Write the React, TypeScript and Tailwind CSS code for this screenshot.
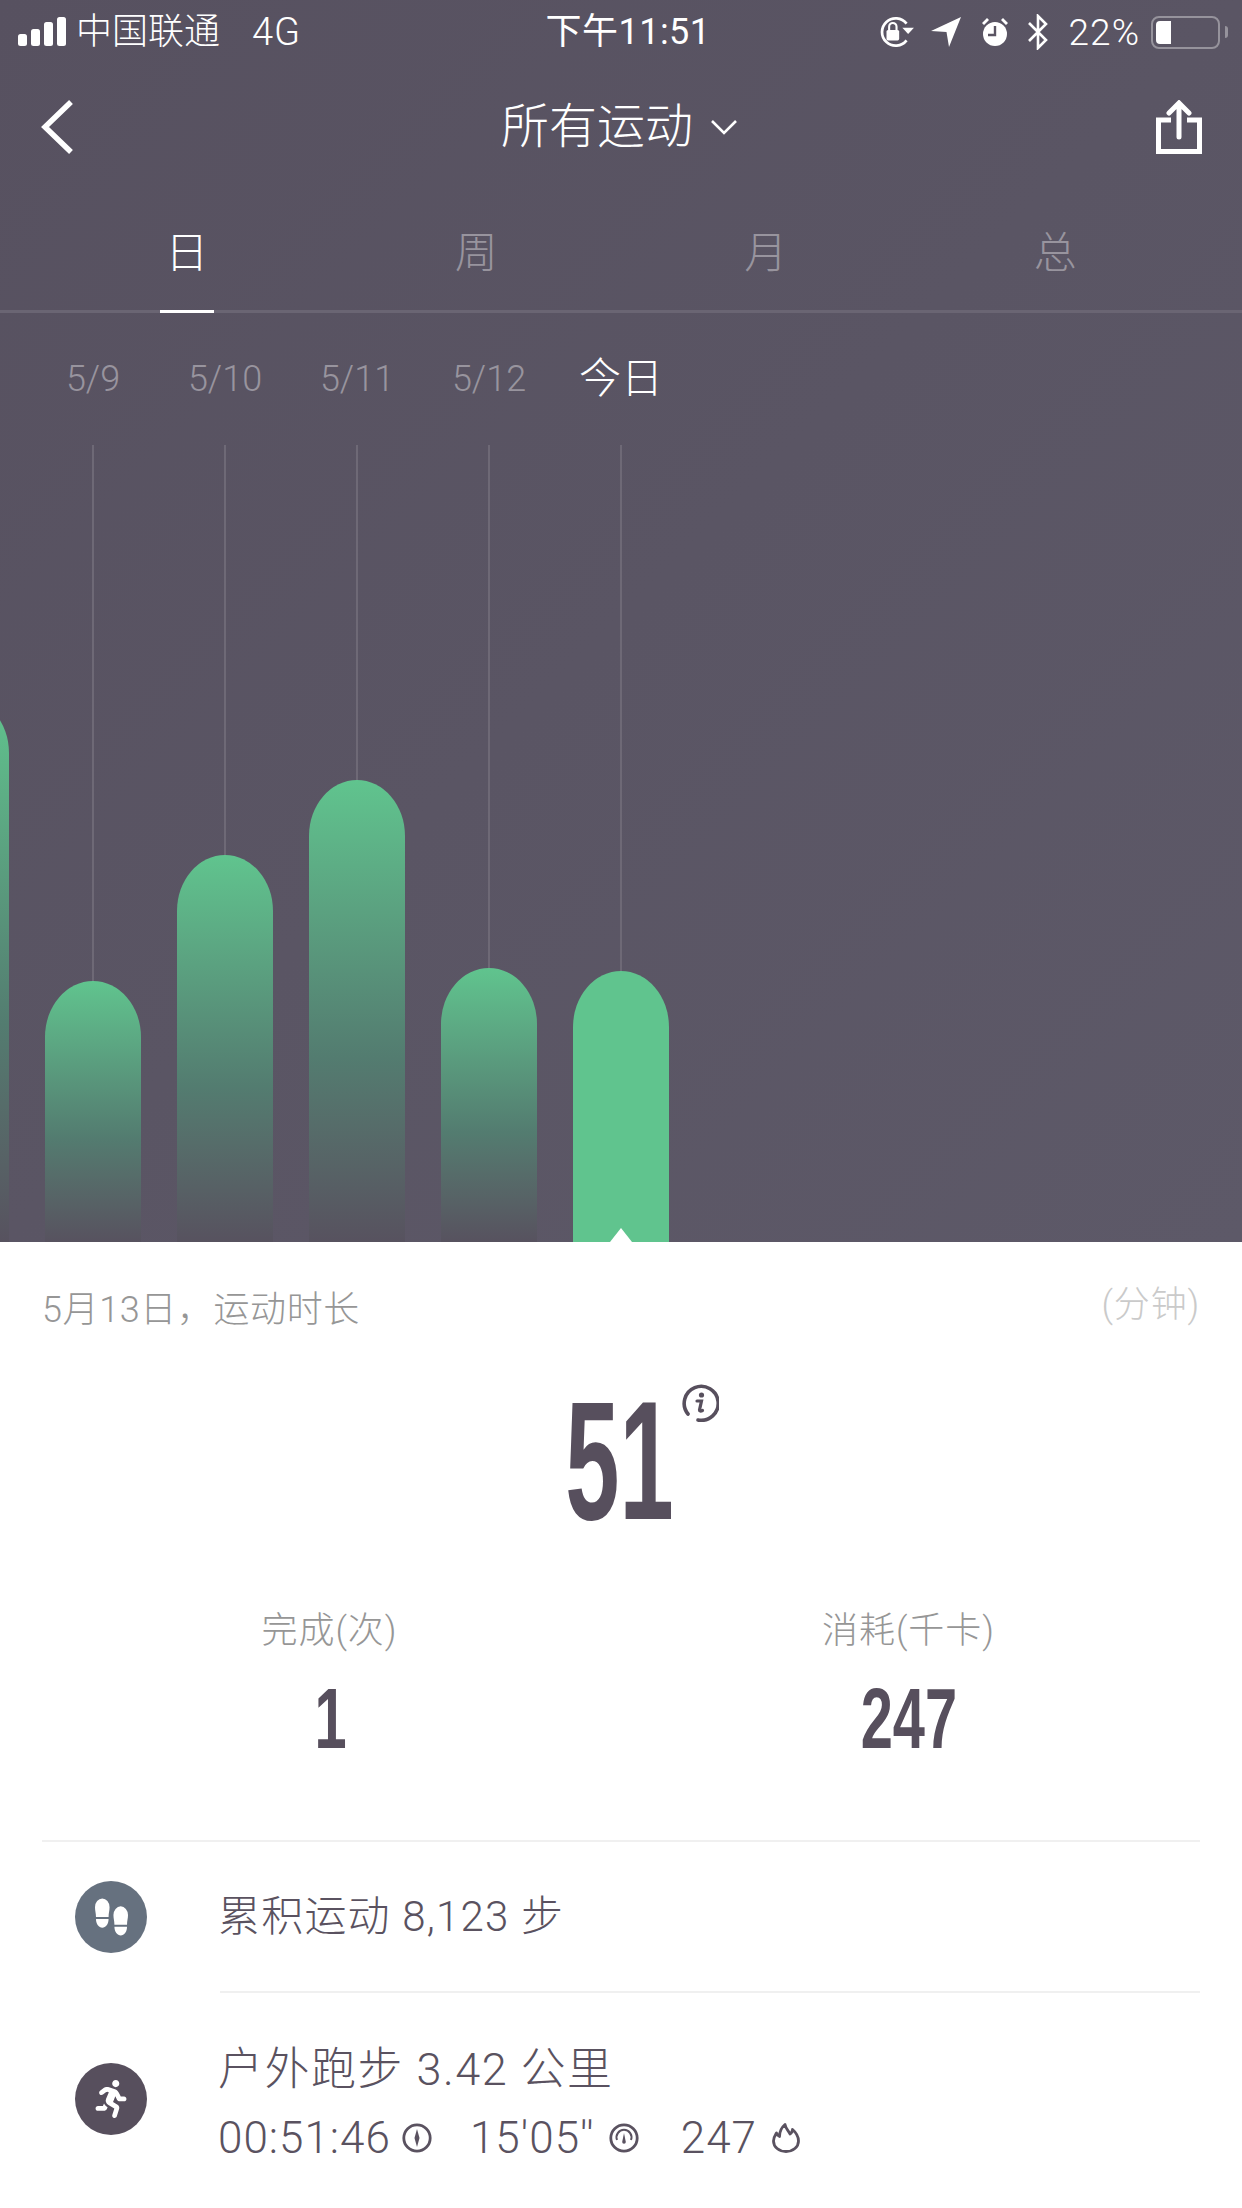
import React from 'react';
import { FaRunning } from 'react-icons/fa';

const days = [
  { label: '', height: 545 },
  { label: '5/9', height: 261 },
  { label: '5/10', height: 387 },
  { label: '5/11', height: 462 },
  { label: '5/12', height: 274 },
  { label: '今日', height: 271, active: true },
];

function StatusBar() {
  return (
    <div className="flex items-center h-[64px] pl-[18px] pr-[14px] text-white text-[36px] leading-none">
      <div className="flex-1 flex items-center">
        <svg width="48" height="30" viewBox="0 0 48 30" fill="white">
          <rect x="0" y="17" width="9" height="12" rx="2.5" />
          <rect x="13" y="12" width="9" height="17" rx="2.5" />
          <rect x="26" y="5" width="9" height="24" rx="2.5" />
          <rect x="39" y="0" width="9" height="29" rx="2.5" />
        </svg>
        <span className="ml-[10px]">中国联通</span>
        <span className="ml-[32px] text-[38px] tracking-[1px]">4G</span>
      </div>
      <div className="ml-[10px] font-normal text-[36px] tracking-[0.5px]">下午11:51</div>
      <div className="flex-1 flex items-center justify-end">
        <svg width="38" height="32" viewBox="0 0 36 30" fill="none" className="mr-[16px]">
          <path d="M28 7A13 13 0 1 0 28 23" stroke="white" strokeWidth="2.6" />
          <path d="M24 11h11l-5.5 6z" fill="white" />
          <rect x="9" y="13" width="12" height="10" rx="1.5" fill="white" />
          <path d="M11.5 13v-3a3.5 3.5 0 0 1 7 0v3" stroke="white" strokeWidth="2" />
        </svg>
        <svg width="30" height="30" viewBox="0 0 30 30" fill="white" className="mr-[20px]">
          <path d="M30 0 18 30 15.500 15 0 14z" />
        </svg>
        <svg width="28" height="30" viewBox="0 0 28 30" className="mr-[19px]">
          <path d="M1 6 6 1l2 2-5 5zM27 6l-5-5-2 2 5 5z" fill="white" />
          <circle cx="14" cy="17" r="12" fill="white" />
          <path d="M14 9v9H7" stroke="#5a5462" strokeWidth="2.4" fill="none" />
        </svg>
        <svg width="20" height="36" viewBox="0 0 20 36" fill="none" className="mr-[21px]">
          <path d="M1 9 18 26 10 34V2l8 8L1 27" stroke="white" strokeWidth="2.6" />
        </svg>
        <span className="text-[37px] tracking-[1px] mr-[11px]">22%</span>
        <div className="w-[69px] h-[33px] rounded-[8px] border-[2.5px] border-[#96939c] p-[3px] flex">
          <div className="w-[15px] bg-white rounded-l-[4px]" />
        </div>
        <div className="w-[3px] h-[12px] bg-[#96939c] ml-[5px] rounded-r-full" />
      </div>
    </div>
  );
}

function NavBar() {
  return (
    <div className="relative flex items-center justify-between h-[127px] pl-[40px] pr-[40px]">
      <svg width="34" height="56" viewBox="0 0 34 56" fill="none" className="mt-[-2px]">
        <path d="M31 3 5 28l26 25" stroke="white" strokeWidth="5.500" />
      </svg>
      <div className="absolute left-[501px] top-[32px] flex items-center text-white text-[48px] leading-[62px]">
        所有运动
        <svg width="28" height="16" viewBox="0 0 28 16" fill="none" className="ml-[17px]">
          <path d="M2 2l12 12L26 2" stroke="white" strokeWidth="2.600" />
        </svg>
      </div>
      <svg width="46" height="54" viewBox="0 0 46 54" fill="none" className="mt-[-2px]">
        <path d="M15 20H2.500v31.500h41V20H31" stroke="white" strokeWidth="5" />
        <path d="M23 37V4M13 13 23 3l10 10" stroke="white" strokeWidth="5" strokeLinecap="round" />
      </svg>
    </div>
  );
}

function Tabs() {
  const tabs = ['日', '周', '月', '总'];
  return (
    <div className="grid grid-cols-4 px-[42px] h-[122px] border-b-[3px] border-[#6a6573] text-[43px]">
      {tabs.map((tab, i) => (
        <div key={tab} className="relative flex justify-center pt-[37px] leading-[50px]">
          <span className={i === 0 ? 'text-white' : 'text-[#98949e]'}>{tab}</span>
          {i === 0 && <div className="absolute bottom-[-3px] w-[54px] h-[3px] bg-white" />}
        </div>
      ))}
    </div>
  );
}

function Chart() {
  return (
    <div className="flex flex-1 ml-[-105px] min-h-0">
      {days.map((day) => (
        <div key={day.height} className="w-[132px] shrink-0 flex flex-col items-center">
          <div
            className={
              day.active
                ? 'h-[132px] pt-[41px] leading-[50px] text-[42px] text-white'
                : 'h-[132px] pt-[42px] leading-[48px] text-[36px] text-[#98949e]'
            }
          >
            {day.label}
          </div>
          {day.label ? <div className="flex-1 w-[2px] bg-[#6e6976]" /> : <div className="flex-1" />}
          <div
            className={
              day.active
                ? 'relative w-[96px] rounded-t-[48px_56px] bg-[#60c48e] flex justify-center'
                : 'w-[96px] rounded-t-[48px_56px] bg-gradient-to-b from-[#60c48e] via-[#537c70] via-60% to-[#57525f]'
            }
            style={{ height: day.height }}
          >
            {day.active && (
              <svg width="22" height="14" viewBox="0 0 22 14" className="absolute bottom-0" fill="white">
                <path d="M11 0 22 14H0z" />
              </svg>
            )}
          </div>
        </div>
      ))}
    </div>
  );
}

function InfoIcon() {
  return (
    <svg width="38" height="38" viewBox="0 0 38 38" fill="none">
      <path d="M7 30A17 17 0 1 1 17 36" stroke="#574f5d" strokeWidth="3.600" strokeLinecap="round" />
      <circle cx="20.500" cy="11" r="2.600" fill="#574f5d" />
      <path d="M16 17h4.500l-2 9c0 1 1 1.500 3 .5" stroke="#574f5d" strokeWidth="3.200" strokeLinecap="round" />
    </svg>
  );
}

function Footprints() {
  return (
    <svg width="33" height="38" viewBox="0 0 34 38" fill="white">
      <path d="M0 9a7.500 9 0 0 1 15 0c0 4-1 6-1 10H1C1 15 0 13 0 9z" />
      <path d="M1 21h13c0 5-3 9-6.500 9S1 26 1 21z" />
      <path d="M19 17a7.500 9 0 0 1 15 0c0 4-1 6-1 10H20c0-4-1-6-1-10z" />
      <path d="M20 29h13c0 5-3 9-6.500 9S20 34 20 29z" />
    </svg>
  );
}

function TimeIcon() {
  return (
    <svg width="30" height="30" viewBox="0 0 30 30" fill="none" className="ml-[11px]">
      <circle cx="15" cy="15" r="13.200" stroke="#5a5260" strokeWidth="2.800" />
      <path d="M15 6l2.500 9-2.500 9-2.500-9z" fill="#5a5260" />
    </svg>
  );
}

function PaceIcon() {
  return (
    <svg width="30" height="30" viewBox="0 0 30 30" fill="none" className="ml-[14px]">
      <circle cx="15" cy="15" r="13.200" stroke="#5a5260" strokeWidth="2.800" />
      <path d="M8 17a7.500 7.500 0 1 1 14 0" stroke="#5a5260" strokeWidth="2" />
      <path d="M15 10l1.800 9a1.800 1.800 0 0 1-3.600 0z" fill="#5a5260" />
    </svg>
  );
}

function FlameIcon() {
  return (
    <svg width="28" height="30" viewBox="0 0 28 30" fill="none" className="ml-[15px]">
      <path
        d="M13 1.500c1 5 3.500 6 5 9.500 1.500-1 2.500-2.500 2.500-4.500 3.500 3 6 7 6 11.500 0 6-5.500 10.500-12.500 10.500S1.500 24 1.500 18c0-3.500 1.500-5.500 3-8 .5 2 1.500 3 3 3.500 0-5 2-9 5.500-12z"
        stroke="#5a5260"
        strokeWidth="2.800"
        strokeLinejoin="round"
      />
    </svg>
  );
}

export default function App() {
  return (
    <div className="w-[1242px] h-[2208px] overflow-hidden bg-white font-['Roboto','Noto_Sans_CJK_SC',sans-serif] font-light">
      <section className="h-[1242px] flex flex-col overflow-hidden bg-gradient-to-br from-[#575160] to-[#5d5968]">
        <StatusBar />
        <NavBar />
        <Tabs />
        <Chart />
      </section>

      <section className="px-[42px]">
        <div className="flex justify-between items-start pt-[43px] text-[36px] leading-[50px]">
          <span className="text-[#969696] tracking-[0.6px]">5月13日，运动时长</span>
          <span className="text-[#cacaca] mt-[-5px] tracking-[0.8px]">(分钟)</span>
        </div>

        <div className="relative flex justify-center mt-[41px] h-[170px]">
          <span className="font-['Liberation_Sans',sans-serif] font-bold text-[168px] leading-[170px] text-[#574f5d] scale-x-[0.58] ml-[-3px]">
            51
          </span>
          <div className="absolute left-[639px] top-[8px]">
            <InfoIcon />
          </div>
        </div>

        <div className="grid grid-cols-2 mt-[60px] pb-[77px] border-b-2 border-[#f0f0f0]">
          <div className="flex flex-col items-center ml-[-2px] mr-[2px]">
            <span className="text-[36px] leading-[50px] text-[#969696] tracking-[1px]">完成(次)</span>
            <span className="font-['Liberation_Sans',sans-serif] font-bold text-[85px] leading-[88px] mt-[19px] ml-[3px] text-[#574f5d] scale-x-[0.68]">
              1
            </span>
          </div>
          <div className="flex flex-col items-center ml-[-2px] mr-[2px]">
            <span className="text-[36px] leading-[50px] text-[#969696] tracking-[1px]">消耗(千卡)</span>
            <span className="font-['Liberation_Sans',sans-serif] font-bold text-[85px] leading-[88px] mt-[19px] text-[#574f5d] scale-x-[0.68]">
              247
            </span>
          </div>
        </div>

        <div className="flex items-center h-[149px] pl-[33px] text-[#5a5260]">
          <div className="w-[72px] h-[72px] rounded-full bg-[#66717f] flex items-center justify-center">
            <Footprints />
          </div>
          <div className="ml-[71px] text-[42px] tracking-[1.2px]">累积运动 8,123 步</div>
        </div>

        <div className="ml-[178px] border-t-2 border-[#f0f0f0]" />

        <div className="flex items-center pl-[33px] pt-[50px] text-[#5a5260]">
          <div className="w-[72px] h-[72px] mb-[12px] rounded-full bg-[#574f5d] flex items-center justify-center text-white">
            <FaRunning size={38} />
          </div>
          <div className="ml-[71px] flex flex-col">
            <div className="text-[45px] tracking-[1.5px] leading-[58px] mt-[-2px]">户外跑步 3.42 公里</div>
            <div className="flex items-center text-[44px] tracking-[1px] leading-[58px] mt-[10px]">
              <span>00:51:46</span>
              <TimeIcon />
              <span className="ml-[38px]">15&apos;05&apos;&apos;</span>
              <PaceIcon />
              <span className="ml-[42px]">247</span>
              <FlameIcon />
            </div>
          </div>
        </div>
      </section>
    </div>
  );
}
